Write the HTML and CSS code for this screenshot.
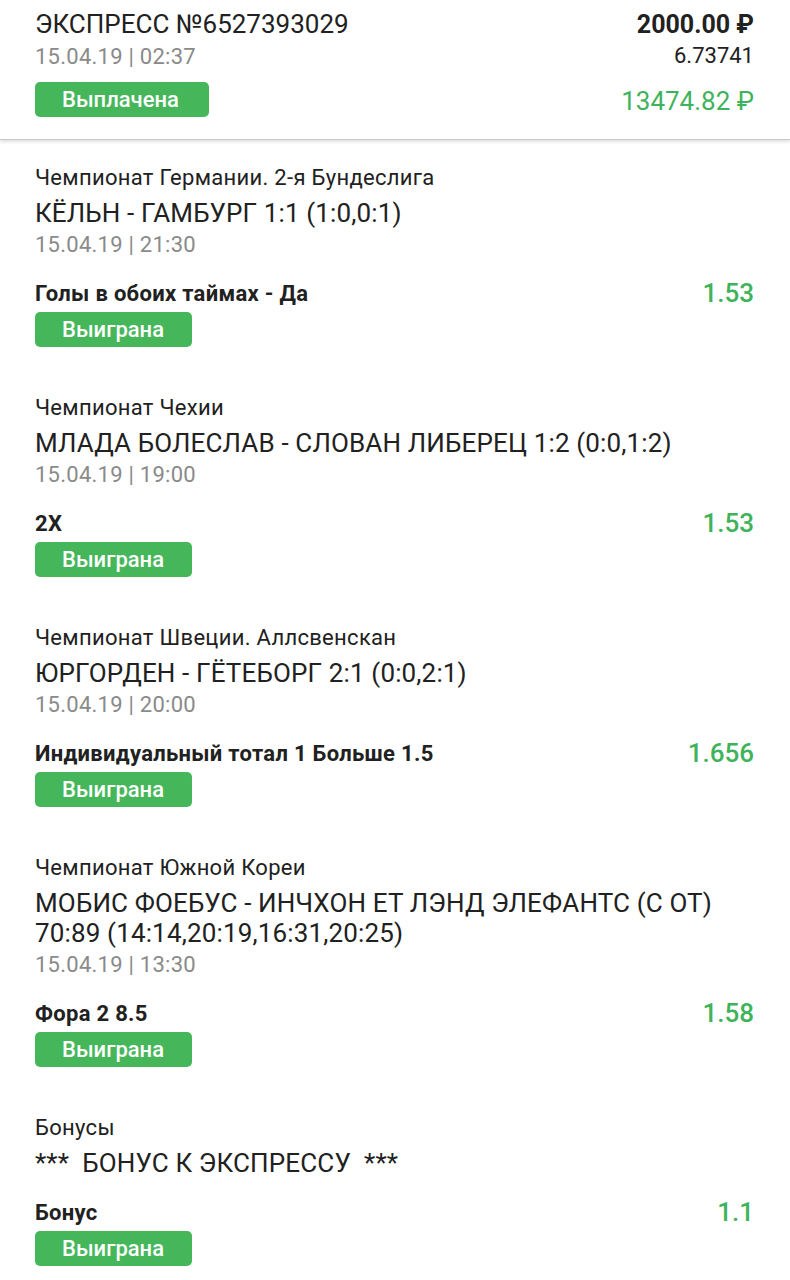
FILE: index.html
```html
<!DOCTYPE html>
<html lang="ru">
<head>
<meta charset="utf-8">
<link rel="stylesheet" href="styles.css">
</head>
<body>
<header class="head">
  <div class="head-left">
    <div class="head-title">ЭКСПРЕСС №6527393029</div>
    <div class="head-date">15.04.19 | 02:37</div>
    <div class="badge badge-head">Выплачена</div>
  </div>
  <div class="head-right">
    <div class="stake">2000.00 ₽</div>
    <div class="coef">6.73741</div>
    <div class="win">13474.82 ₽</div>
  </div>
</header>
<main>
  <section class="event">
    <div class="league">Чемпионат Германии. 2-я Бундеслига</div>
    <div class="match">КЁЛЬН - ГАМБУРГ 1:1 (1:0,0:1)</div>
    <div class="date">15.04.19 | 21:30</div>
    <div class="bet-row">
      <div class="bet">Голы в обоих таймах - Да</div>
      <div class="odds">1.53</div>
    </div>
    <div class="badge">Выиграна</div>
  </section>
  <section class="event">
    <div class="league">Чемпионат Чехии</div>
    <div class="match">МЛАДА БОЛЕСЛАВ - СЛОВАН ЛИБЕРЕЦ 1:2 (0:0,1:2)</div>
    <div class="date">15.04.19 | 19:00</div>
    <div class="bet-row">
      <div class="bet">2X</div>
      <div class="odds">1.53</div>
    </div>
    <div class="badge">Выиграна</div>
  </section>
  <section class="event">
    <div class="league">Чемпионат Швеции. Аллсвенскан</div>
    <div class="match">ЮРГОРДЕН - ГЁТЕБОРГ 2:1 (0:0,2:1)</div>
    <div class="date">15.04.19 | 20:00</div>
    <div class="bet-row">
      <div class="bet">Индивидуальный тотал 1 Больше 1.5</div>
      <div class="odds">1.656</div>
    </div>
    <div class="badge">Выиграна</div>
  </section>
  <section class="event">
    <div class="league">Чемпионат Южной Кореи</div>
    <div class="match">МОБИС ФОЕБУС - ИНЧХОН ЕТ ЛЭНД ЭЛЕФАНТС (С ОТ) 70:89 (14:14,20:19,16:31,20:25)</div>
    <div class="date">15.04.19 | 13:30</div>
    <div class="bet-row">
      <div class="bet">Фора 2 8.5</div>
      <div class="odds">1.58</div>
    </div>
    <div class="badge">Выиграна</div>
  </section>
  <section class="event">
    <div class="league">Бонусы</div>
    <div class="match match-bonus">***&nbsp; БОНУС К ЭКСПРЕССУ &nbsp;***</div>
    <div class="bet-row">
      <div class="bet">Бонус</div>
      <div class="odds">1.1</div>
    </div>
    <div class="badge">Выиграна</div>
  </section>
</main>
</body>
</html>
```
FILE: styles.css
```css
* { box-sizing: border-box; }
html, body { margin: 0; padding: 0; background: #fff; }
body {
  font-family: Roboto, "Noto Sans", sans-serif;
  color: #212121;
  width: 790px;
  height: 1280px;
  overflow: hidden;
}
.head {
  display: flex;
  justify-content: space-between;
  padding: 9px 36px 22px 35px;
  border-bottom: 1px solid #c8c8c8;
  box-shadow: 0 2px 3px rgba(0,0,0,0.12);
}
.head-left, .head-right { display: flex; flex-direction: column; }
.head-right { align-items: flex-end; }
.head-title { font-size: 26px; line-height: 30px; }
.head-date { font-size: 22px; line-height: 30px; margin-top: 3px; color: #8a8a8a; letter-spacing: 0.25px; }
.stake { font-size: 25px; line-height: 30px; font-weight: 700; margin-top: 1px; }
.coef { font-size: 22px; line-height: 30px; margin-top: 1px; }
.win { font-size: 26px; line-height: 30px; margin-top: 15px; color: #3fb35b; }

.event { padding: 23px 36px 23px 35px; }
.league { font-size: 22px; line-height: 30px; letter-spacing: 0.3px; }
.match { font-size: 26px; line-height: 30px; margin-top: 5px; letter-spacing: 0.15px; }
.date { font-size: 22px; line-height: 30px; margin-top: 2px; color: #8a8a8a; letter-spacing: 0.25px; }
.bet-row {
  display: flex;
  justify-content: space-between;
  align-items: center;
  margin-top: 18px;
  height: 30px;
}
.match-bonus + .bet-row { margin-top: 19px; }
.bet { font-size: 22px; font-weight: 700; letter-spacing: 0.3px; }
.odds { font-size: 26px; font-weight: 500; color: #3fb35b; }
.badge {
  display: inline-block;
  align-self: flex-start;
  margin-top: 4px;
  height: 35px;
  line-height: 35px;
  padding: 0 28px 0 27px;
  border-radius: 5px;
  background: #45b75a;
  color: #fff;
  font-size: 22px;
  font-weight: 500;
}
.badge-head { margin-top: 10px; padding-right: 30px; }
```
